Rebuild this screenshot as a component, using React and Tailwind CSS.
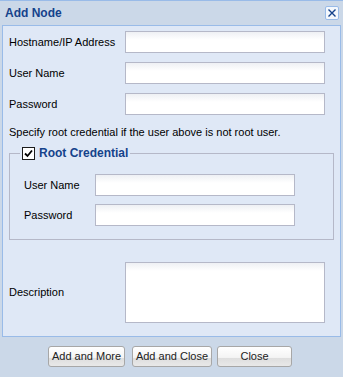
import React from 'react'

const font = { fontFamily: '"Liberation Sans", Arial, sans-serif' }

function TextInput({ w = 'w-[200px]' }) {
  return (
    <div className={`${w} h-[22px] border border-[#b5b8c8] bg-[linear-gradient(#eef0f4,#ffffff_8px)]`} />
  )
}

function Row({ label, children, labelW = 'w-[116px]' }) {
  return (
    <div className="flex items-center h-[22px]">
      <div className={`${labelW} text-[11px] text-black`}>{label}</div>
      {children}
    </div>
  )
}

function Btn({ children, w }) {
  return (
    <button
      type="button"
      className={`${w} h-[21px] rounded-[3px] border border-[#a7a7a7] text-[11px] text-[#222] bg-[linear-gradient(#ffffff,#f4f4f4_55%,#dedede_60%,#e8e8e8)]`}
    >
      {children}
    </button>
  )
}

export default function App() {
  return (
    <div className="w-[343px] h-[377px] bg-[#cbd8e8] border-t border-[#99bbe8] flex flex-col" style={font}>
      {/* header */}
      <div className="h-[24px] flex items-center justify-between pl-[5px] pr-[4px]">
        <span className="text-[12px] font-bold text-[#15428b]">Add Node</span>
        <div className="w-[14px] h-[14px] rounded-[2px] border border-[#99bbe8] bg-[#f4f8fd] flex items-center justify-center">
          <svg width="10" height="10" viewBox="0 0 10 10">
            <path d="M1.5 1.5 L8.5 8.5 M8.5 1.5 L1.5 8.5" stroke="#15428b" strokeWidth="1.4" />
          </svg>
        </div>
      </div>

      {/* body */}
      <div className="ml-[2px] w-[339px] h-[312px] bg-[#dfe8f6] border border-[#99bbe8] pl-[6px] pt-[5px] flex flex-col">
        <div className="flex flex-col gap-[9px]">
          <Row label="Hostname/IP Address"><TextInput /></Row>
          <Row label="User Name"><TextInput /></Row>
          <Row label="Password"><TextInput /></Row>
        </div>
        <div className="text-[11px] mt-[10px] h-[14px] leading-[14px] text-black">
          Specify root credential if the user above is not root user.
        </div>

        <fieldset className="mt-[7px] w-[325px] h-[94px] border border-[#b5b8c8] pl-[14px] pt-0">
          <legend className="flex items-center -ml-[4px] px-[2px] h-[14px]">
            <span className="w-[13px] h-[13px] border border-[#1c1c1c] bg-white flex items-center justify-center mr-[4px]">
              <svg width="9" height="9" viewBox="0 0 9 9">
                <path d="M1 4.5 L3.5 7 L8 1.5" stroke="#000" strokeWidth="1.8" fill="none" />
              </svg>
            </span>
            <span className="text-[12px] font-bold text-[#15428b]">Root Credential</span>
          </legend>
          <div className="flex flex-col gap-[8px] mt-[14px]">
            <Row label="User Name" labelW="w-[71px]"><TextInput /></Row>
            <Row label="Password" labelW="w-[71px]"><TextInput /></Row>
          </div>
        </fieldset>

        <div className="flex items-center mt-[22px]">
          <div className="w-[116px] text-[11px] text-black">Description</div>
          <div className="w-[200px] h-[61px] border border-[#b5b8c8] bg-[linear-gradient(#eef0f4,#ffffff_8px)]" />
        </div>
      </div>

      {/* buttons */}
      <div className="flex mt-[9px] pl-[48px]">
        <Btn w="w-[77px]">Add and More</Btn>
        <div className="w-[7px]" />
        <Btn w="w-[80px]">Add and Close</Btn>
        <div className="w-[5px]" />
        <Btn w="w-[75px]">Close</Btn>
      </div>
    </div>
  )
}
